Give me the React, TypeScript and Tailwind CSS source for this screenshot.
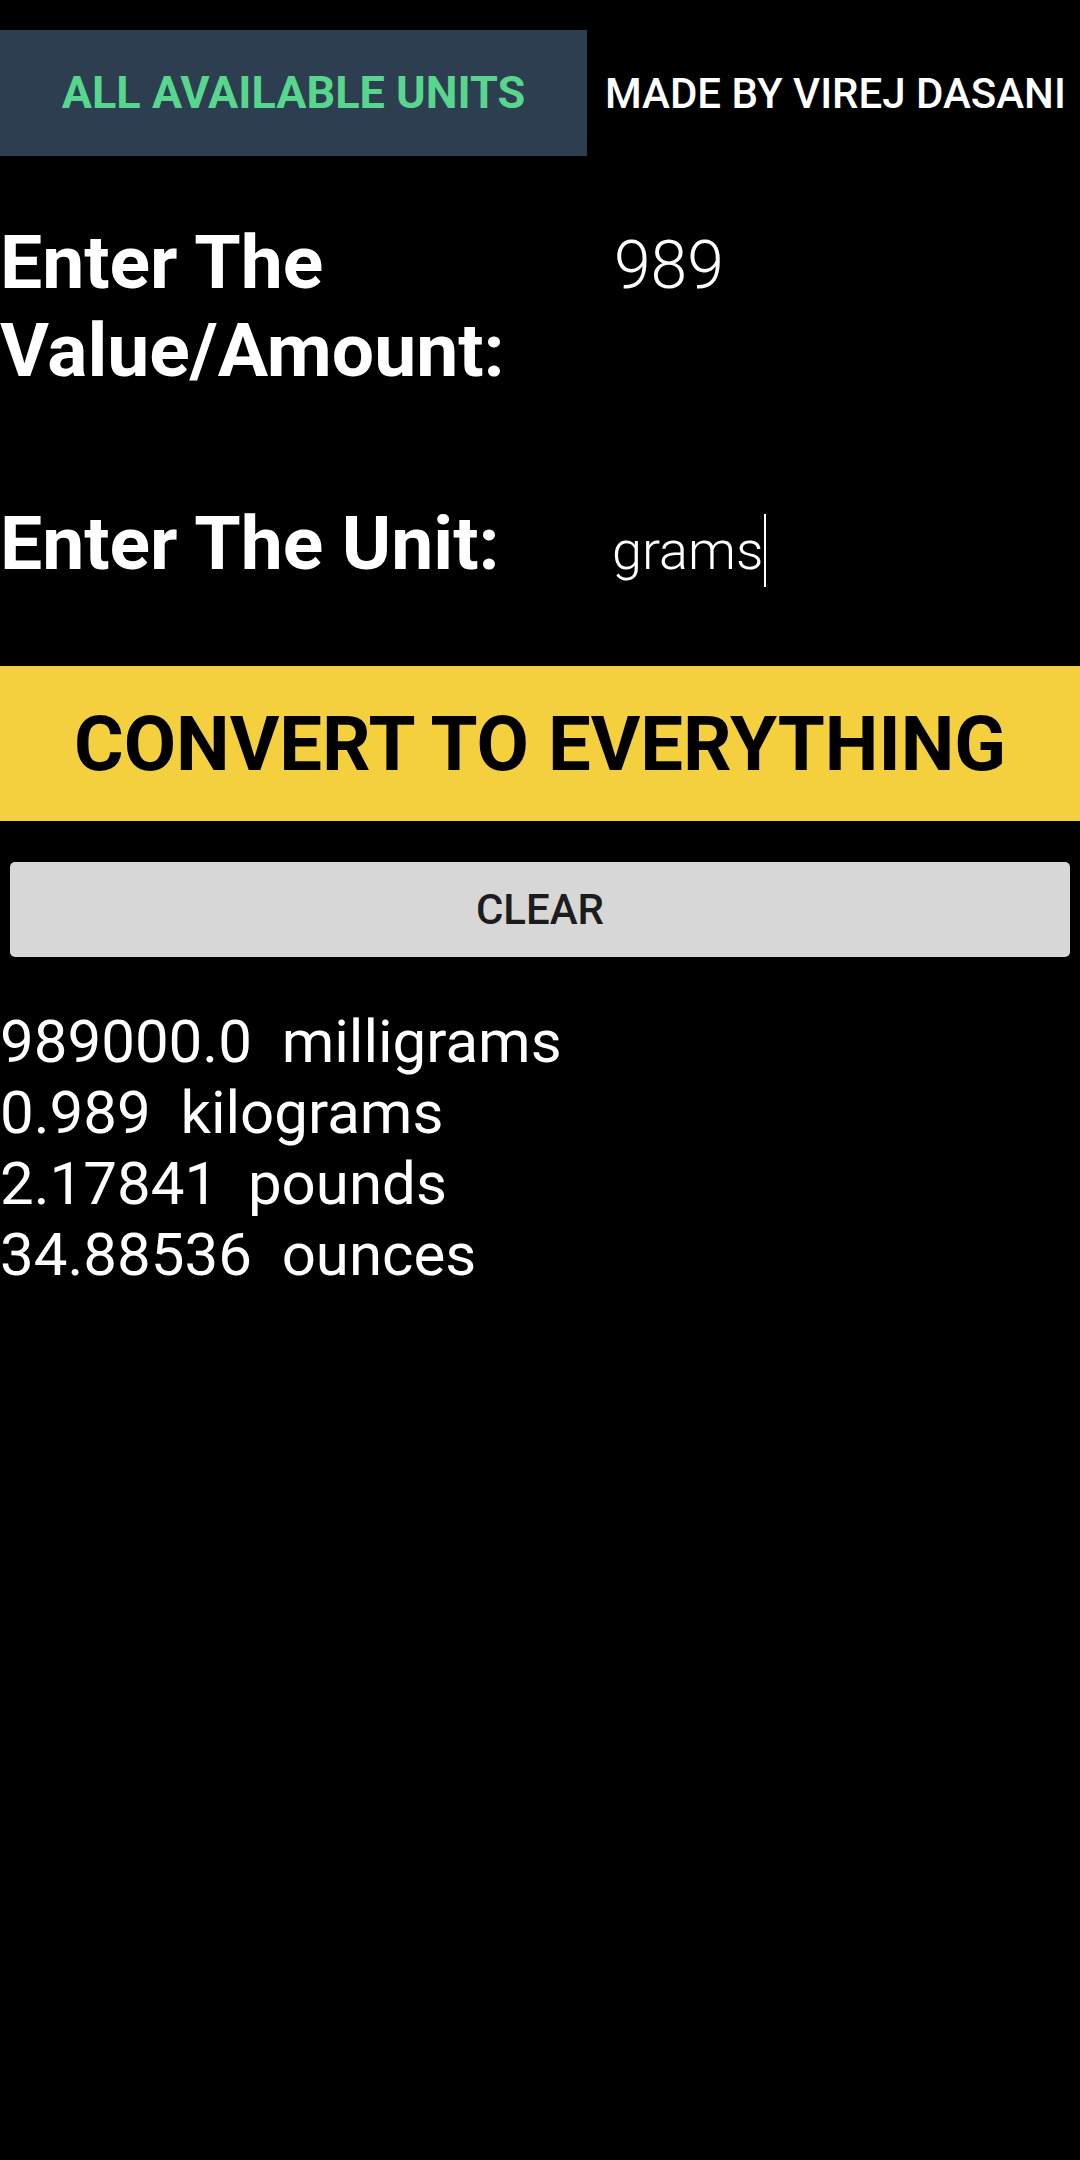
import { FC } from 'react';

const results = [
   ['989000.0', 'milligrams'],
   ['0.989', 'kilograms'],
   ['2.17841', 'pounds'],
   ['34.88536', 'ounces'],
];

const App: FC = () => {
   return (
      <div className="min-h-[2160px] w-[1080px] bg-black text-white font-['Roboto',sans-serif]">
         <div className="pt-[30px] flex items-center">
            <div className="w-[587px] h-[126px] bg-[#2c3e50] flex items-center justify-center">
               <span className="text-[45px] font-bold text-[#58d68d]">ALL AVAILABLE UNITS</span>
            </div>
            <div className="flex-1 pl-[18px] text-[42px] font-medium whitespace-nowrap">MADE BY VIREJ DASANI</div>
         </div>

         <div className="mt-[60px] flex items-baseline">
            <div className="w-[614px] text-[75px] leading-[88px] font-bold">
               Enter The
               <br />
               Value/Amount:
            </div>
            <div className="text-[66px] font-light">989</div>
         </div>

         <div className="mt-[105px] flex items-baseline">
            <div className="w-[612px] text-[75px] leading-[88px] font-bold">Enter The Unit:</div>
            <div className="text-[54px] font-light flex items-baseline">
               grams
               <span className="inline-block w-[2px] h-[73px] bg-white self-center ml-[1px]" />
            </div>
         </div>

         <div className="mt-[75px] h-[155px] bg-[#f4d03f] flex items-center justify-center">
            <span className="text-[76px] font-bold text-black">CONVERT TO EVERYTHING</span>
         </div>

         <div className="px-[10px] mt-[41px]">
            <button className="w-full h-[95px] rounded-[5px] bg-[#d6d7d6] text-[#1c1c1c] text-[42px] font-medium">
               CLEAR
            </button>
         </div>

         <div className="mt-[49px] text-[60px] leading-[71px]">
            {results.map(([value, unit]) => (
               <div key={unit} className="whitespace-pre">
                  {value}  {unit}
               </div>
            ))}
         </div>
      </div>
   );
};

export default App;
